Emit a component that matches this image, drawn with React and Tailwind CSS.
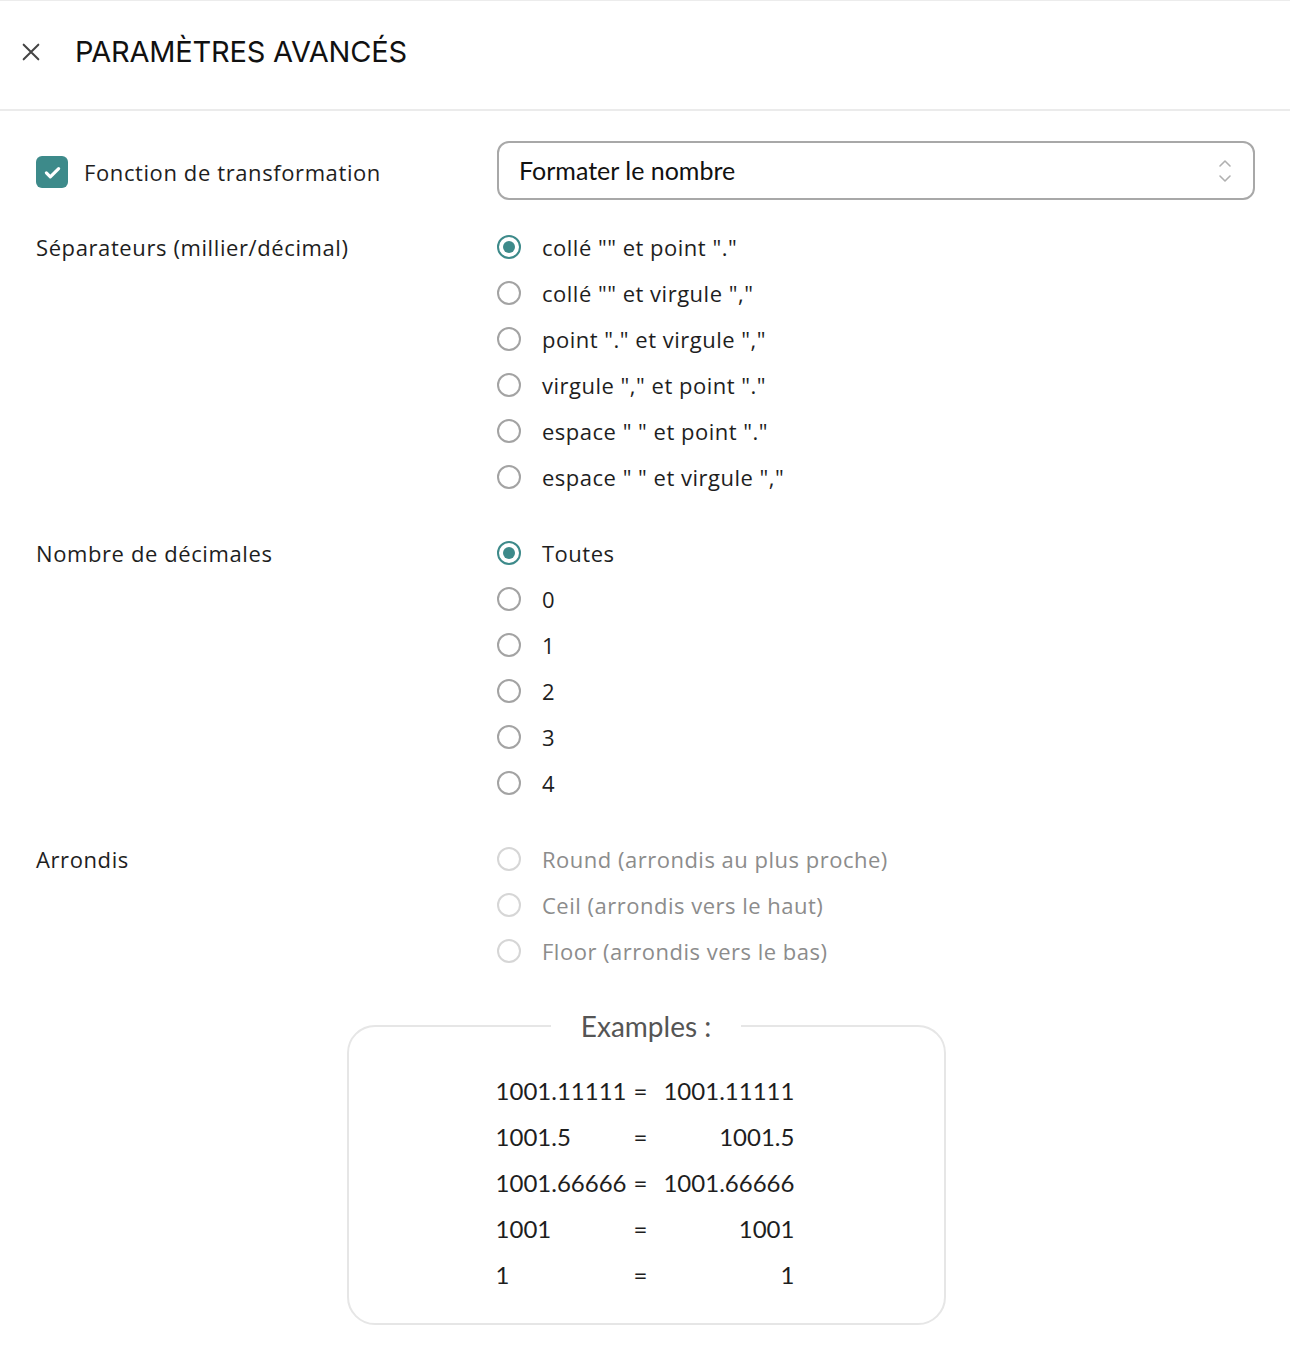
import React, { useState } from 'react';

const separators = [
  'collé "" et point "."',
  'collé "" et virgule ","',
  'point "." et virgule ","',
  'virgule "," et point "."',
  'espace " " et point "."',
  'espace " " et virgule ","',
];

const decimals = ['Toutes', '0', '1', '2', '3', '4'];

const roundings = [
  'Round (arrondis au plus proche)',
  'Ceil (arrondis vers le haut)',
  'Floor (arrondis vers le bas)',
];

const examples = [
  ['1001.11111', '1001.11111'],
  ['1001.5', '1001.5'],
  ['1001.66666', '1001.66666'],
  ['1001', '1001'],
  ['1', '1'],
];

const Radio = ({ label, checked, disabled, onSelect }) => (
  <label className="flex items-center h-[46px] cursor-pointer" onClick={onSelect}>
    <span
      className={`w-6 h-6 rounded-full border-2 flex items-center justify-center ${
        disabled ? 'border-[#d6d6d6]' : checked ? 'border-[#3d8a8a]' : 'border-[#a3a3a3]'
      }`}
    >
      {checked && <span className="w-3 h-3 rounded-full bg-[#3d8a8a]" />}
    </span>
    <span className={`ml-[21px] text-[22px] tracking-[0.5px] ${disabled ? 'text-[#8c8c8c]' : 'text-[#1e1e1e]'}`}>
      {label}
    </span>
  </label>
);

const Section = ({ title, children }) => (
  <div className="grid grid-cols-[461px_1fr] mb-[30px]">
    <div className="text-[22px] tracking-[0.6px] text-[#1e1e1e] h-[46px] flex items-center">{title}</div>
    <div>{children}</div>
  </div>
);

const App = () => {
  const [sep, setSep] = useState(0);
  const [dec, setDec] = useState(0);

  return (
    <div className="w-[1290px] min-h-[1350px] bg-white font-['Open_Sans',sans-serif] border-t border-[#ececec]">
      <div className="h-[110px] flex items-center border-b-2 border-[#ebebeb] pl-[20px] pb-[6px]">
        <svg width="22" height="22" viewBox="0 0 24 24" fill="none" stroke="#444" strokeWidth="2.2" strokeLinecap="round">
          <path d="M4 4l16 16M20 4L4 20" />
        </svg>
        <h1 className="ml-[33px] text-[29px] text-[#111] font-['Inter',sans-serif] tracking-[-0.2px]">
          PARAMÈTRES AVANCÉS
        </h1>
      </div>

      <div className="pl-[36px] pr-[35px] pt-[30px]">
        <div className="grid grid-cols-[461px_1fr] items-center mb-[24px]">
          <div className="flex items-center pt-[3px]">
            <span className="w-8 h-8 rounded-[6px] bg-[#3d8a8a] flex items-center justify-center">
              <svg width="21" height="21" viewBox="0 0 24 24" fill="none" stroke="white" strokeWidth="3.6" strokeLinecap="round" strokeLinejoin="round">
                <path d="M5 12.5l4.5 4.5L19 7.5" />
              </svg>
            </span>
            <span className="ml-4 text-[22px] tracking-[0.6px] text-[#1e1e1e]">Fonction de transformation</span>
          </div>
          <div className="h-[59px] border-2 border-[#a8a8a8] rounded-[12px] flex items-center justify-between pl-[20px] pr-[20px]">
            <span className="text-[25px] text-[#111] font-['Lato',sans-serif]">Formater le nombre</span>
            <svg width="16" height="26" viewBox="0 0 16 26" fill="none" stroke="#b0b0b0" strokeWidth="1.6" strokeLinecap="round" strokeLinejoin="round">
              <path d="M3 8l5-5 5 5M3 18l5 5 5-5" />
            </svg>
          </div>
        </div>

        <Section title="Séparateurs (millier/décimal)">
          {separators.map((s, i) => (
            <Radio key={s} label={s} checked={sep === i} onSelect={() => setSep(i)} />
          ))}
        </Section>

        <Section title="Nombre de décimales">
          {decimals.map((d, i) => (
            <Radio key={d} label={d} checked={dec === i} onSelect={() => setDec(i)} />
          ))}
        </Section>

        <Section title="Arrondis">
          {roundings.map((r) => (
            <Radio key={r} label={r} disabled />
          ))}
        </Section>
      </div>

      <div className="flex justify-center pl-[2px]">
        <fieldset className="w-[599px] border-2 border-[#e6e6e6] rounded-[28px] pb-[25px] mt-[1px]">
          <legend className="mx-auto px-[30px] text-[28px] text-[#555] font-['Lato',sans-serif]">Examples :</legend>
          <div className="flex justify-center pt-[21px]">
            <div className="grid grid-cols-[auto_auto_auto] text-[24px] text-[#1e1e1e] font-['Lato',sans-serif] -ml-[2px]">
              {examples.map(([a, b]) => (
                <React.Fragment key={a}>
                  <span className="h-[46px] flex items-center">{a}</span>
                  <span className="h-[46px] flex items-center pl-[7px] pr-[16px]">=</span>
                  <span className="h-[46px] flex items-center justify-end">{b}</span>
                </React.Fragment>
              ))}
            </div>
          </div>
        </fieldset>
      </div>
    </div>
  );
};

export default App;
